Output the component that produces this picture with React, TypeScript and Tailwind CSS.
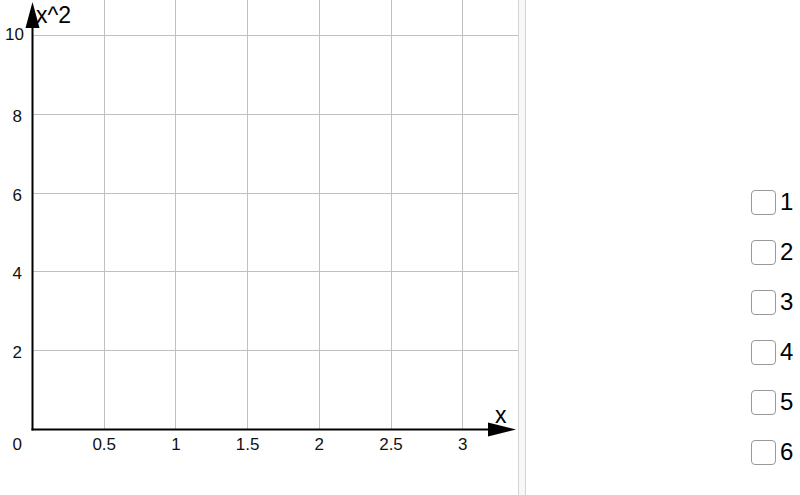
import React from 'react'

const ox = 32
const oy = 429
const sx = 143.4 // px per unit x
const sy = 39.4 // px per unit y

const xTicks = [0.5, 1, 1.5, 2, 2.5, 3]
const yTicks = [2, 4, 6, 8, 10]

function Graph() {
    return (
        <svg width={518} height={495} className="block" style={{ fontFamily: '"Liberation Sans", Arial, sans-serif' }}>
            {/* grid */}
            {xTicks.map((t) => {
                const x = Math.round(ox + t * sx) + 0.5
                return <line key={'gx' + t} x1={x} y1={0} x2={x} y2={oy} stroke="#c0c0c0" strokeWidth={1} />
            })}
            {yTicks.map((t) => {
                const y = Math.round(oy - t * sy) + 0.5
                return <line key={'gy' + t} x1={ox} y1={y} x2={518} y2={y} stroke="#c0c0c0" strokeWidth={1} />
            })}

            {/* axes */}
            <line x1={32.5} y1={10} x2={32.5} y2={430.5} stroke="#000" strokeWidth={2} />
            <line x1={31.5} y1={429.5} x2={500} y2={429.5} stroke="#000" strokeWidth={2} />
            <polygon points="32.5,2 39.5,28 25.5,28" fill="#000" />
            <polygon points="516,429.5 488,422.5 488,436.5" fill="#000" />

            {/* labels */}
            {xTicks.map((t) => (
                <text key={'lx' + t} x={ox + t * sx + 0.5} y={450} fontSize={17} textAnchor="middle" fill="#111">
                    {t}
                </text>
            ))}
            {yTicks.map((t) => (
                <text key={'ly' + t} x={t === 10 ? 24 : 22} y={t === 10 ? 40 : oy - t * sy + 8} fontSize={17} textAnchor="end" fill="#111">
                    {t}
                </text>
            ))}
            <text x={22} y={450} fontSize={17} textAnchor="end" fill="#111">0</text>
            <text x={36} y={23} fontSize={23} fill="#000">x^2</text>
            <text x={495} y={423} fontSize={23} fill="#000">x</text>
        </svg>
    )
}

export default function App() {
    return (
        <div className="flex w-[800px] h-[495px] bg-white overflow-hidden" style={{ fontFamily: '"Liberation Sans", Arial, sans-serif' }}>
            <Graph />

            {/* Divider */}
            <div className="w-[8px] h-full bg-[#f8f8f8] border-l border-r border-[#d4d4d4]" />

            {/* Checkboxes */}
            <div className="flex-1 flex flex-col gap-[26px] pl-[225px] pt-[190px]">
                {[1, 2, 3, 4, 5, 6].map((n) => (
                    <label key={n} className="flex items-center gap-[4px] h-[24px]">
                        <span className="block w-[25px] h-[25px] rounded-[4px] border border-[#999] bg-white" />
                        <span className="text-[24px] leading-none text-black">{n}</span>
                    </label>
                ))}
            </div>
        </div>
    )
}
